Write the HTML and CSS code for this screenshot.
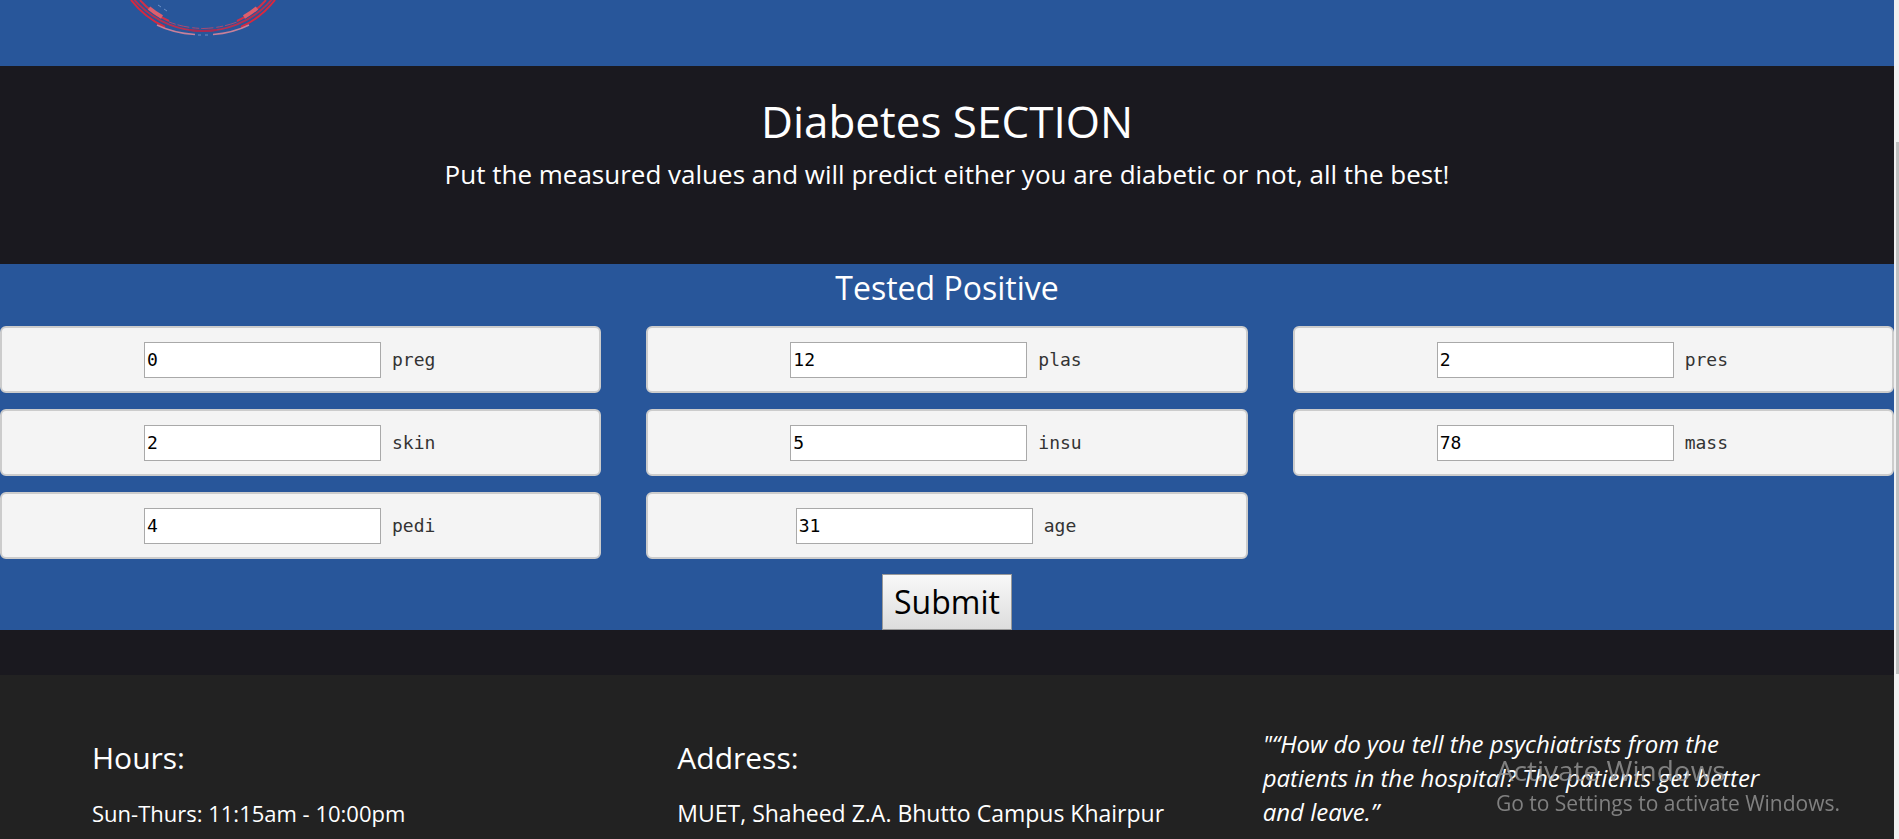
FILE: index.html
```
<!DOCTYPE html>
<html lang="en">
<head>
<meta charset="utf-8">
<title>Diabetes Section</title>
<link rel="stylesheet" href="styles.css">
</head>
<body>
<div class="page">
  <header class="banner">
    <svg class="seal" viewBox="0 0 160 40" width="160" height="40" fill="none" aria-hidden="true">
      <circle cx="80" cy="-60" r="91" stroke="#c42c4a" stroke-width="2" opacity=".9"/>
      <path d="M8 0Q22 18 42 27M152 0Q138 18 118 27" stroke="#d8283f" stroke-width="2"/>
      <path d="M34 25Q50 33 72 34.500M126 25Q110 33 90 34.500" stroke="#c9809a" stroke-width="1.500"/>
      <path d="M17 0Q28 13 46 21M143 0Q132 13 114 21" stroke="#cf3049" stroke-width="2"/>
      <path d="M26 8Q32 13 39 17M134 8Q128 13 121 17" stroke="#dd5f6d" stroke-width="4"/>
      <path d="M46 22Q62 28 80 28.500Q98 28 114 22" stroke="#a94a72" stroke-width="1" stroke-dasharray="7 2 12 3"/>
      <path d="M66 30Q80 32 94 30" stroke="#a52c53" stroke-width="2"/>
      <path d="M75 35h3M82 35h3M35 5l3 2M41 9l3 2" stroke="#6d8fc6" stroke-width="1"/>
    </svg>
  </header>
  <section class="intro">
    <h1 class="intro-title">Diabetes SECTION</h1>
    <p class="intro-text">Put the measured values and will predict either you are diabetic or not, all the best!</p>
  </section>
  <form class="predict">
    <h2 class="result">Tested Positive</h2>
    <div class="fields">
      <label class="field"><input class="field-input" type="text" value="0">preg</label>
      <label class="field"><input class="field-input" type="text" value="12">plas</label>
      <label class="field"><input class="field-input" type="text" value="2">pres</label>
      <label class="field"><input class="field-input" type="text" value="2">skin</label>
      <label class="field"><input class="field-input" type="text" value="5">insu</label>
      <label class="field"><input class="field-input" type="text" value="78">mass</label>
      <label class="field"><input class="field-input" type="text" value="4">pedi</label>
      <label class="field"><input class="field-input" type="text" value="31">age</label>
    </div>
    <button class="submit" type="button">Submit</button>
  </form>
  <footer class="footer">
    <section class="column">
      <h3 class="column-title">Hours:</h3>
      <p class="column-text">Sun-Thurs: 11:15am - 10:00pm</p>
    </section>
    <section class="column">
      <h3 class="column-title">Address:</h3>
      <p class="column-text address">MUET, Shaheed Z.A. Bhutto Campus Khairpur</p>
    </section>
    <blockquote class="quote">"“How do you tell the psychiatrists from the patients in the hospital? The patients get better and leave.”</blockquote>
  </footer>
</div>
<div class="scrollbar" aria-hidden="true"><div class="thumb"></div></div>
<aside class="watermark">
  <p class="watermark-title">Activate Windows</p>
  <p class="watermark-text">Go to Settings to activate Windows.</p>
</aside>
</body>
</html>
```

FILE: styles.css
```
* {
  box-sizing: border-box;
}

body {
  display: flex;
  height: 100vh;
  margin: 0;
  overflow: hidden;
  background: #1a191f;
  color: #fff;
  font-family: "Open Sans", "Noto Sans", sans-serif;
}

h1, h2, h3, p, blockquote {
  margin: 0;
  font-weight: 400;
}

.page {
  display: flex;
  flex: 1;
  flex-direction: column;
}

.banner {
  height: 66px;
  padding-left: 123px;
  background: #28569a;
}

.seal {
  display: block;
}

.intro {
  padding: 28px 16px 71px;
  text-align: center;
}

.intro-title {
  font-size: 44px;
  line-height: 54px;
}

.intro-text {
  margin-top: 8px;
  margin-bottom: 1px;
  font-size: 26px;
  line-height: 36px;
}

.predict {
  padding-top: 4px;
  background: #28569a;
  text-align: center;
}

.result {
  font-size: 32px;
  line-height: 40px;
}

.fields {
  display: grid;
  grid-template-columns: repeat(3, 1fr);
  gap: 16px 45px;
  margin-top: 18px;
}

.field {
  display: flex;
  align-items: center;
  justify-content: center;
  gap: 11px;
  height: 67px;
  padding-right: 22px;
  border: 2px solid #ccc;
  border-radius: 6px;
  background: #f4f4f4;
  color: #333;
  font: 18px/24px "DejaVu Sans Mono", "Liberation Mono", monospace;
}

.field-input {
  width: 237px;
  height: 36px;
  padding: 1px 2px;
  border: 1px solid #a9a9a9;
  background: #fff;
  color: #000;
  font: inherit;
}

.submit {
  display: block;
  height: 56px;
  margin: 15px auto 0;
  padding: 0 11px;
  border: 1px solid #999;
  background: linear-gradient(#f8f8f8, #ddd);
  color: #000;
  font: 32px/40px "Open Sans", "Noto Sans", sans-serif;
}

.footer {
  display: grid;
  flex: 1;
  grid-template-columns: repeat(3, 1fr);
  margin-top: 45px;
  padding: 52px 46px 0 92px;
  background: #222;
}

.column {
  padding-top: 11px;
}

.column-title {
  font-size: 30px;
  line-height: 40px;
}

.column-text {
  margin-top: 18px;
  font-size: 22px;
  line-height: 34px;
}

.address {
  font-size: 23px;
}

.quote {
  padding-right: 50px;
  font-size: 24px;
  font-style: italic;
  line-height: 34px;
}

.scrollbar {
  width: 5px;
  padding: 142px 0 0 2px;
  background: #f1f1f1;
}

.thumb {
  height: 532px;
  background: #c1c1c1;
}

.watermark {
  position: fixed;
  right: 59px;
  bottom: 21px;
  color: rgba(160, 160, 160, 0.75);
}

.watermark-title {
  font-size: 28px;
  line-height: 36px;
}

.watermark-text {
  font-size: 21px;
  line-height: 30px;
}
```
